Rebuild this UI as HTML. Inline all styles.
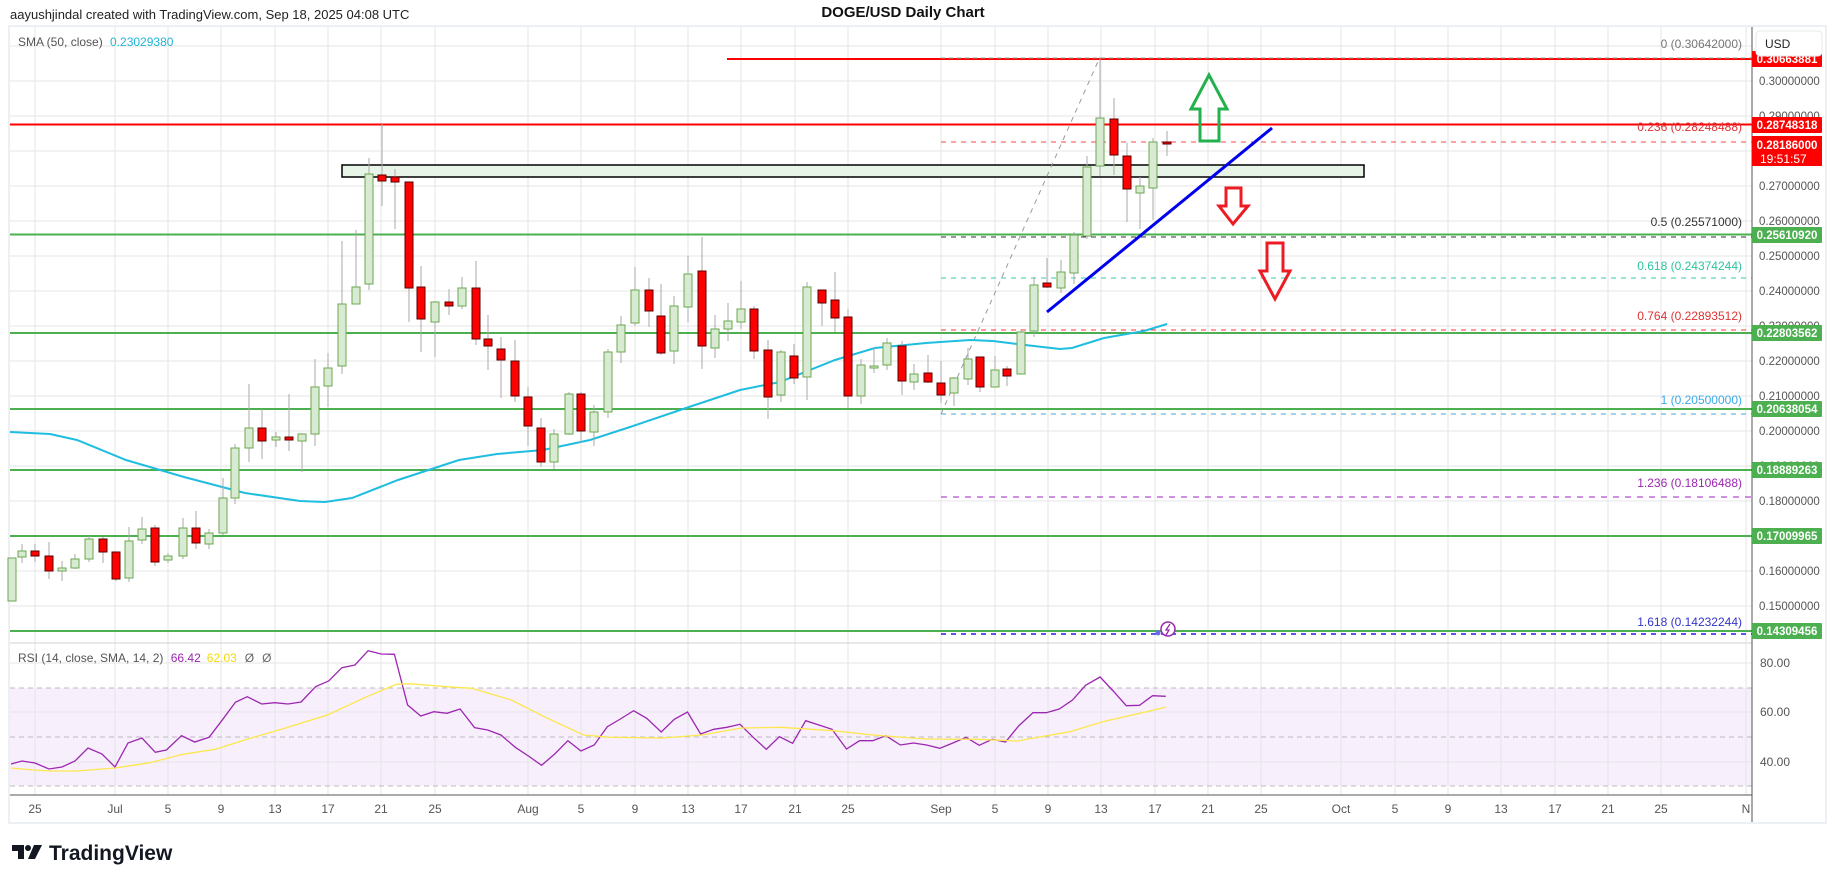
<!DOCTYPE html>
<html><head><meta charset="utf-8">
<style>
html,body{margin:0;padding:0;background:#fff;width:1835px;height:883px;overflow:hidden;font-family:"Liberation Sans",sans-serif;}
svg{position:absolute;left:0;top:0;}
</style></head>
<body>
<svg id="s" width="1835" height="883" xmlns="http://www.w3.org/2000/svg" font-family="Liberation Sans, sans-serif"></svg>
<script>
const S=document.getElementById('s');
let h='';
function Y(p){return 186+(0.27-p)*3500;}
h+=`<rect x="9" y="26" width="1817" height="797" fill="#fff" stroke="#eceff3" stroke-width="2"/>`;
h+=`<rect x="10" y="688" width="1742" height="98" fill="#f7effc"/>`;
const dl=[[35,'25'],[115,'Jul'],[168,'5'],[221,'9'],[275,'13'],[328,'17'],[381,'21'],[435,'25'],[528,'Aug'],[581,'5'],[635,'9'],[688,'13'],[741,'17'],[795,'21'],[848,'25'],[941,'Sep'],[995,'5'],[1048,'9'],[1101,'13'],[1155,'17'],[1208,'21'],[1261,'25'],[1341,'Oct'],[1395,'5'],[1448,'9'],[1501,'13'],[1555,'17'],[1608,'21'],[1661,'25'],[1746,'N']];
dl.forEach(d=>{h+=`<line x1="${d[0]}" y1="27" x2="${d[0]}" y2="795" stroke="#e6e6e6" stroke-width="1"/>`;
 h+=`<text x="${d[0]}" y="813" font-size="12" fill="#555" text-anchor="middle">${d[1]}</text>`;});
for(let k=31;k>=15;k--){const p=k/100,y=Y(p);if(y<28)continue;h+=`<line x1="10" y1="${y}" x2="1752" y2="${y}" stroke="#e6e6e6"/>`;
 if(k<31)h+=`<text x="1759" y="${y+4}" font-size="11.5" fill="#555">${p.toFixed(8)}</text>`;}
h+=`<line x1="10" y1="643" x2="1752" y2="643" stroke="#e0e0e0" stroke-width="1.5"/>`;
[[663,'80.00'],[712,'60.00'],[762,'40.00']].forEach(a=>{h+=`<line x1="10" y1="${a[0]}" x2="1752" y2="${a[0]}" stroke="#e6e6e6"/><text x="1760" y="${a[0]+4}" font-size="12" fill="#555">${a[1]}</text>`;});
[688,737,786].forEach(y=>{h+=`<line x1="10" y1="${y}" x2="1752" y2="${y}" stroke="#bbb" stroke-dasharray="5,4"/>`;});
h+=`<rect x="342" y="165" width="1022" height="12" fill="#e8f4e8" stroke="#000" stroke-width="1.5"/>`;
h+=`<line x1="727" y1="59" x2="1752" y2="59" stroke="#f00" stroke-width="2"/>`;
h+=`<line x1="941" y1="58" x2="1752" y2="58" stroke="#999" stroke-dasharray="4,4"/>`;
h+=`<line x1="10" y1="124.5" x2="1752" y2="124.5" stroke="#f00" stroke-width="2"/>`;
h+=`<line x1="941" y1="142" x2="1752" y2="142" stroke="#f44" stroke-dasharray="5,5"/>`;
[234.5,333,409,470,536,631].forEach(y=>{h+=`<line x1="10" y1="${y}" x2="1752" y2="${y}" stroke="#4caf50" stroke-width="2"/>`;});
h+=`<line x1="941" y1="237" x2="1752" y2="237" stroke="#333" stroke-dasharray="5,5"/>`;
h+=`<line x1="941" y1="278" x2="1752" y2="278" stroke="#26d0a8" stroke-dasharray="5,5"/>`;
h+=`<line x1="941" y1="330" x2="1752" y2="330" stroke="#f33" stroke-dasharray="5,5"/>`;
h+=`<line x1="941" y1="414" x2="1752" y2="414" stroke="#3aa8e8" stroke-dasharray="5,5"/>`;
h+=`<line x1="941" y1="497" x2="1752" y2="497" stroke="#a020c0" stroke-dasharray="6,6"/>`;
h+=`<line x1="941" y1="634" x2="1752" y2="634" stroke="#2222dd" stroke-dasharray="5,5" stroke-width="1.5"/>`;
[[48,'0 (0.30642000)','#777'],[131,'0.236 (0.28248488)','#d33'],[226,'0.5 (0.25571000)','#333'],[270,'0.618 (0.24374244)','#2bc49e'],[320,'0.764 (0.22893512)','#d33'],[404,'1 (0.20500000)','#3aa8e8'],[487,'1.236 (0.18106488)','#9c27b0'],[626,'1.618 (0.14232244)','#3333cc']].forEach(a=>{
 h+=`<text x="1742" y="${a[0]}" font-size="12" fill="${a[2]}" text-anchor="end">${a[1]}</text>`;});
h+=`<line x1="941" y1="414" x2="1100" y2="57" stroke="#999" stroke-dasharray="5,5"/>`;
const sma=[[10,432],[50,434],[77,440],[126,460],[184,477],[245,493],[300,501],[325,502],[352,498],[398,480],[459,460],[497,454],[543,450],[590,440],[630,427],[689,407],[740,390],[780,382],[835,360],[875,348],[926,343],[970,340],[993,341],[1025,345],[1060,349],[1072,348],[1104,338],[1144,331],[1167,324]];
h+=`<polyline points="${sma.map(p=>p.join(',')).join(' ')}" fill="none" stroke="#1fbde0" stroke-width="2"/>`;
const C=[[12,558,601,558,601,1],[22,551,557,544,563,1],[35,551,556,544,562,0],[49,556,571,542,579,0],[62,568,571,561,581,1],[75,559,568,554,569,1],[89,539,559,536,562,1],[103,539,552,537,563,0],[116,552,579,552,581,0],[129,541,578,527,582,1],[142,529,540,517,544,1],[155,528,562,525,566,0],[168,556,560,553,563,1],[183,528,556,518,559,1],[196,528,543,511,549,0],[209,533,544,529,549,1],[223,498,533,478,535,1],[235,448,498,444,504,1],[249,428,448,384,462,1],[262,428,441,409,459,0],[276,437,440,432,447,1],[289,437,440,394,451,0],[302,434,441,433,472,1],[315,387,434,359,446,1],[328,368,386,353,407,1],[342,304,366,241,374,1],[356,287,304,230,304,1],[369,174,284,158,290,1],[382,175,181,124,206,0],[395,177,182,169,229,0],[409,182,288,182,322,0],[421,287,319,266,352,0],[435,302,322,301,357,1],[449,302,306,289,315,0],[462,288,306,277,309,1],[476,288,339,261,345,0],[488,339,346,315,370,0],[501,349,360,337,398,0],[515,361,396,340,402,0],[528,397,426,387,446,0],[541,428,462,418,467,0],[554,434,462,429,469,1],[569,394,434,392,435,1],[581,394,431,392,443,0],[594,412,432,405,446,1],[608,352,412,349,418,1],[621,325,352,316,363,1],[635,290,323,267,326,1],[649,290,311,278,327,0],[661,316,353,284,355,0],[674,306,351,296,364,1],[688,274,307,256,322,1],[702,271,346,237,369,0],[715,329,348,315,358,1],[728,321,329,303,341,1],[741,309,322,281,329,1],[754,309,351,306,359,0],[768,350,397,340,419,0],[781,352,395,350,402,1],[794,356,378,344,384,0],[807,287,377,282,400,1],[822,290,303,290,326,0],[835,300,318,272,332,0],[848,317,396,309,408,0],[861,365,396,359,404,1],[874,366,367,347,373,1],[887,343,365,338,370,1],[902,346,381,341,395,0],[914,374,382,364,390,1],[928,373,382,355,383,0],[941,383,395,361,403,0],[954,378,393,377,406,1],[968,359,379,348,385,1],[980,357,387,357,392,0],[995,370,387,356,387,1],[1007,369,376,366,386,0],[1021,332,374,329,374,1],[1034,285,331,277,337,1],[1047,283,287,258,288,0],[1061,272,288,260,293,1],[1074,235,273,232,284,1],[1087,167,236,156,239,1],[1100,118,166,57,176,1],[1114,119,155,98,175,0],[1127,156,189,143,222,0],[1140,186,193,177,229,1],[1153,142,188,138,220,1],[1167,142,144,131,156,0]];
C.forEach(c=>{const [x,t,b,hi,lo,g]=c;
 h+=`<line x1="${x}" y1="${hi}" x2="${x}" y2="${lo}" stroke="#aaa"/>`;
 const hh=Math.max(b-t,2);
 if(g)h+=`<rect x="${x-4}" y="${t}" width="8" height="${hh}" fill="#d9ead3" stroke="#6aa84f" stroke-width="1"/>`;
 else h+=`<rect x="${x-4}" y="${t}" width="8" height="${hh}" fill="#f00" stroke="#5a0000" stroke-width="1"/>`;});
h+=`<line x1="1047" y1="312" x2="1272" y2="128" stroke="#0000ee" stroke-width="3"/>`;
h+=`<polygon points="1209,75 1191,109 1200,109 1200,141 1219,141 1219,109 1227,109" fill="none" stroke="#22b14c" stroke-width="3" stroke-linejoin="miter"/>`;
h+=`<polygon points="1226,188 1241,188 1241,206 1248,206 1233,224 1219,206 1226,206" fill="none" stroke="#ed1c24" stroke-width="3"/>`;
h+=`<polygon points="1267,243 1283,243 1283,271 1290,271 1275,299 1260,271 1267,271" fill="none" stroke="#ed1c24" stroke-width="3"/>`;
h+=`<circle cx="1168" cy="629" r="7" fill="#fff" stroke="#9c27b0" stroke-width="1.5"/><path d="M1170,624 L1166,630 L1169,630 L1166,635" fill="none" stroke="#9c27b0" stroke-width="1.3"/><circle cx="1158" cy="633" r="2.5" fill="#6a6aee"/>`;
const R=[[0,320],[8,337],[25,330],[48,287],[68,306],[90,292],[108,245],[130,187],[148,170],[170,192],[190,188],[210,192],[230,186],[252,140],[272,123],[292,83],[312,75],[332,32],[352,42],[372,43],[392,195],[412,228],[432,215],[452,220],[472,207],[494,263],[514,270],[534,285],[556,322],[576,348],[596,376],[616,342],[636,302],[656,333],[676,315],[696,260],[716,237],[736,212],[756,235],[778,276],[798,238],[818,216],[838,282],[858,268],[878,262],[898,253],[918,292],[938,328],[958,290],[978,310],[998,242],[1018,255],[1038,268],[1060,327],[1080,302],[1100,302],[1120,287],[1142,315],[1162,309],[1182,315],[1202,325],[1222,309],[1242,292],[1262,316],[1282,298],[1302,306],[1322,258],[1344,218],[1364,218],[1384,207],[1404,180],[1424,136],[1446,111],[1466,153],[1486,197],[1506,196],[1526,167],[1546,169]].map(p=>[150+p[0]/1.522,640+p[1]/3]);
const RL=[[11,764],[22,761],[35,763],[49,769],[62,767],[75,761],[88,748],[102,754],[115,767],[128,743],[142,738]];
h+=`<polyline points="${RL.concat(R).map(p=>p[0].toFixed(1)+','+p[1].toFixed(1)).join(' ')}" fill="none" stroke="#9c27b0" stroke-width="1.3"/>`;
const YS=[[0,368],[50,343],[100,328],[150,296],[200,268],[270,225],[330,170],[375,133],[395,131],[450,140],[490,145],[550,180],[600,230],[660,285],[700,292],[780,294],[840,285],[900,264],[960,262],[1040,272],[1100,285],[1180,297],[1260,298],[1320,303],[1400,275],[1450,245],[1546,202]].map(p=>[150+p[0]/1.522,640+p[1]/3]);
const YL=[[11,768],[33,770],[50,771],[77,771],[115,768]];
h+=`<polyline points="${YL.concat(YS).map(p=>p[0].toFixed(1)+','+p[1].toFixed(1)).join(' ')}" fill="none" stroke="#fde74c" stroke-width="1.3"/>`;
h+=`<line x1="1752" y1="27" x2="1752" y2="822" stroke="#555" stroke-width="1"/>`;
h+=`<line x1="10" y1="795" x2="1752" y2="795" stroke="#555" stroke-width="1"/>`;
function tag(y,txt,col,hgt){hgt=hgt||16;h+=`<rect x="1752" y="${y-hgt/2}" width="70" height="${hgt}" fill="${col}" rx="1"/><text x="1787" y="${y+4}" font-size="11.5" font-weight="bold" fill="#fff" text-anchor="middle">${txt}</text>`;}
tag(59,'0.30663881','#f00');
h+=`<rect x="1756" y="31" width="66" height="25" fill="#fff" stroke="#e8e8e8" rx="4"/><text x="1765" y="48" font-size="12" fill="#222">USD</text>`;
tag(125,'0.28748318','#f00');
h+=`<rect x="1752" y="136" width="70" height="30" fill="#f00"/><text x="1787" y="149" font-size="11.5" font-weight="bold" fill="#fff" text-anchor="middle">0.28186000</text><text x="1760" y="163" font-size="12" fill="#fff">19:51:57</text>`;
tag(235,'0.25610920','#4caf50');
tag(333,'0.22803562','#4caf50');
tag(409,'0.20638054','#4caf50');
tag(470,'0.18889263','#4caf50');
tag(536,'0.17009965','#4caf50');
tag(631,'0.14309456','#4caf50');
h+=`<text x="10" y="19" font-size="13" fill="#222">aayushjindal created with TradingView.com, Sep 18, 2025 04:08 UTC</text>`;
h+=`<text x="903" y="17" font-size="15" font-weight="bold" fill="#111" text-anchor="middle">DOGE/USD Daily Chart</text>`;
h+=`<text x="18" y="46" font-size="12" fill="#555">SMA (50, close) <tspan fill="#1fb5d6" dx="4">0.23029380</tspan></text>`;
h+=`<text x="18" y="662" font-size="12" fill="#555">RSI (14, close, SMA, 14, 2) <tspan fill="#9c27b0" dx="4">66.42</tspan><tspan fill="#f5d90a" dx="6">62.03</tspan><tspan fill="#666" dx="8">Ø</tspan><tspan fill="#666" dx="8">Ø</tspan></text>`;
h+=`<path d="M12,845 H24 V859 H18 V851 H12 Z" fill="#131722"/><circle cx="28" cy="848" r="3" fill="#131722"/><path d="M34,845 H42 L35,859 H28 Z" fill="#131722"/>`;
h+=`<text x="49" y="860" font-size="21" font-weight="bold" fill="#131722">TradingView</text>`;
S.innerHTML=h;
</script>
</body></html>
